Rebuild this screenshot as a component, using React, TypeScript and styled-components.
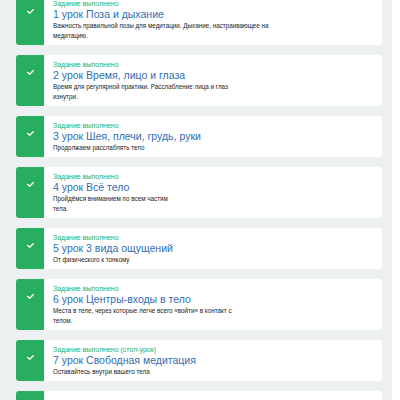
import styled, { createGlobalStyle } from 'styled-components';
import { FaCheck } from 'react-icons/fa';

const GlobalStyle = createGlobalStyle`
	body {
		margin: 0;
		background: #fff;
		font-family: "Liberation Sans", Arial, sans-serif;
	}
`;

const Page = styled.div`
	width: 392px;
	height: 400px;
	overflow: hidden;
	background: #ecf0f1;
	box-sizing: border-box;
	padding: 0 10px 0 16px;
`;

const List = styled.div`
	display: flex;
	flex-direction: column;
	gap: 10px;
	margin-top: -6px;
`;

const Card = styled.div<{ $empty?: boolean }>`
	display: flex;
	min-height: ${(p) => (p.$empty ? '41px' : 'auto')};
	background: #fff;
	border-radius: 3px;
	overflow: hidden;
`;

const Status = styled.div`
	flex: 0 0 28px;
	background: #27ae60;
	color: #fff;
	display: flex;
	justify-content: center;
	align-items: flex-start;
	padding-top: 14px;
	font-size: 7px;
`;

const Body = styled.div`
	flex: 1;
	padding: 5px 8px 4px 9px;
`;

const Label = styled.div`
	font-size: 7px;
	line-height: 9px;
	color: #27ae60;
`;

const Title = styled.div`
	font-size: 10.5px;
	line-height: 13px;
	color: #2f6eb4;
`;

const Desc = styled.div`
	font-size: 6.3px;
	line-height: 10px;
	color: #222;
`;

interface Lesson {
	label: string;
	title: string;
	desc: string[];
}

const lessons: Lesson[] = [
	{ label: 'Задание выполнено', title: '1 урок Поза и дыхание', desc: ['Важность правильной позы для медитации. Дыхание, настраивающее на', 'медитацию.'] },
	{ label: 'Задание выполнено', title: '2 урок Время, лицо и глаза', desc: ['Время для регулярной практики. Расслабление лица и глаз', 'изнутри.'] },
	{ label: 'Задание выполнено', title: '3 урок Шея, плечи, грудь, руки', desc: ['Продолжаем расслаблять тело'] },
	{ label: 'Задание выполнено', title: '4 урок Всё тело', desc: ['Пройдёмся вниманием по всем частям', 'тела.'] },
	{ label: 'Задание выполнено', title: '5 урок 3 вида ощущений', desc: ['От физического к тонкому'] },
	{ label: 'Задание выполнено', title: '6 урок Центры-входы в тело', desc: ['Места в теле, через которые легче всего «войти» в контакт с', 'телом.'] },
	{ label: 'Задание выполнено (стоп-урок)', title: '7 урок Свободная медитация', desc: ['Оставайтесь внутри вашего тела'] },
];

export default function App() {
	return (
		<>
			<GlobalStyle />
			<Page>
				<List>
					{lessons.map((l) => (
						<Card key={l.title}>
							<Status>
								<FaCheck />
							</Status>
							<Body>
								<Label>{l.label}</Label>
								<Title>{l.title}</Title>
								<Desc>
									{l.desc.map((line, i) => (
										<div key={i}>{line}</div>
									))}
								</Desc>
							</Body>
						</Card>
					))}
					<Card $empty>
						<Status />
						<Body />
					</Card>
				</List>
			</Page>
		</>
	);
}
